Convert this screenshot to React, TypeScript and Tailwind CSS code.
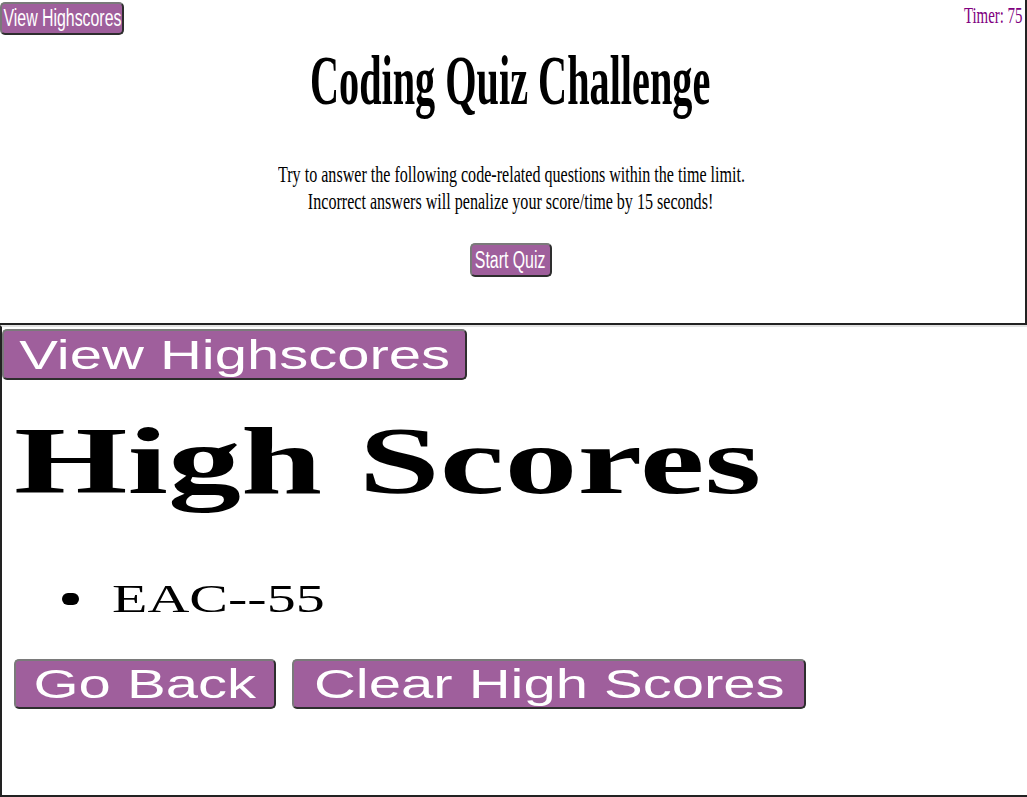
const serif = { fontFamily: '"Liberation Serif", "Times New Roman", serif' };
const sans = { fontFamily: '"Liberation Sans", Arial, sans-serif' };

const btn =
  'flex items-center justify-center overflow-visible whitespace-nowrap rounded-[5px] border-2 border-t-[#7a7a7a] border-l-[#7a7a7a] border-r-[#2e2e2e] border-b-[#2e2e2e] bg-[#9f5f9c] text-white';

export default function App() {
  return (
    <div className="w-[1027px] h-[797px] bg-white overflow-hidden text-black">
      {/* quiz start screen (squeezed) */}
      <div className="h-[325px] border-r-2 border-b-2 border-[#222] flex flex-col">
        <div className="flex justify-between items-start">
          <button className={`${btn} mt-[2px] w-[124px] h-[33px] text-[23px]`} style={sans}>
            <span className="inline-block scale-x-[0.69]">View Highscores</span>
          </button>
          <span className="mt-[1px] mr-[3px] text-[24px] leading-[28px] text-[#800080]" style={serif}>
            <span className="inline-block origin-right scale-x-[0.62]">Timer: 75</span>
          </span>
        </div>
        <h1 className="mt-[11px] pr-[4px] text-center text-[70px] leading-none font-bold whitespace-nowrap" style={serif}>
          <span className="inline-block scale-x-[0.575]">Coding Quiz Challenge</span>
        </h1>
        <div className="mt-[45px] pr-[3px] text-center text-[24px] leading-[27px] whitespace-nowrap" style={serif}>
          <div>
            <span className="inline-block scale-x-[0.67]">
              Try to answer the following code-related questions within the time limit.
            </span>
          </div>
          <div>
            <span className="inline-block scale-x-[0.67]">
              Incorrect answers will penalize your score/time by 15 seconds!
            </span>
          </div>
        </div>
        <div className="mt-[28px] pr-[4px] flex justify-center">
          <button className={`${btn} w-[82px] h-[34px] text-[23px]`} style={sans}>
            <span className="inline-block scale-x-[0.69]">Start Quiz</span>
          </button>
        </div>
      </div>

      {/* high scores screen (stretched) */}
      <div className="h-[472px] border-l-2 border-b-2 border-[#222] border-t-2 border-t-[#e2e2e2]">
        <button className={`${btn} mt-[2px] w-[465px] h-[51px] text-[40px]`} style={sans}>
          <span className="inline-block scale-x-[1.45]">View Highscores</span>
        </button>
        <h1 className="mt-[33px] ml-[12px] text-[96px] leading-none font-bold whitespace-nowrap" style={serif}>
          <span className="inline-block origin-left scale-x-[1.52]">High Scores</span>
        </h1>
        <ul className="mt-[70px]">
          <li className="flex items-center h-[40px]">
            <span className="ml-[60px] w-[17px] h-[12px] rounded-full bg-black" />
            <span className="ml-[33px] text-[40px] leading-none whitespace-nowrap" style={serif}>
              <span className="inline-block origin-left scale-x-[1.45]">EAC--55</span>
            </span>
          </li>
        </ul>
        <div className="mt-[40px] ml-[12px] flex gap-[16px]">
          <button className={`${btn} w-[262px] h-[50px] text-[40px]`} style={sans}>
            <span className="inline-block scale-x-[1.45]">Go Back</span>
          </button>
          <button className={`${btn} w-[514px] h-[50px] text-[40px]`} style={sans}>
            <span className="inline-block scale-x-[1.45]">Clear High Scores</span>
          </button>
        </div>
      </div>
    </div>
  );
}
